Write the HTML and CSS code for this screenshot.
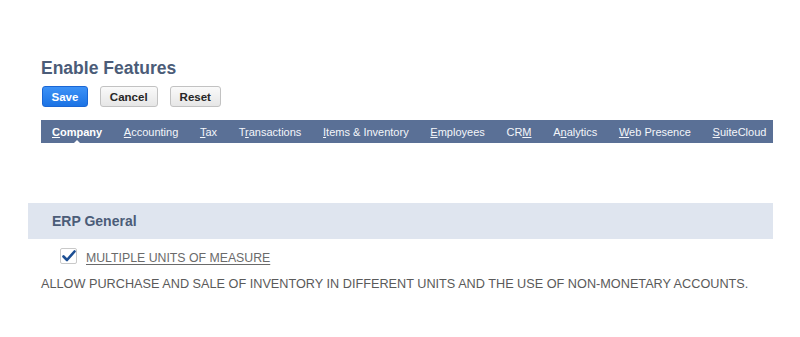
FILE: index.html
```html
<!DOCTYPE html>
<html>
<head>
<meta charset="utf-8">
<link rel="stylesheet" href="styles.css">
</head>
<body>
<div class="page">
  <div class="top">
    <h1 class="title">Enable Features</h1>
    <div class="buttons">
      <button class="btn btn-primary">Save</button>
      <button class="btn">Cancel</button>
      <button class="btn">Reset</button>
    </div>
    <nav class="tabs">
      <span class="tab active"><u>C</u>ompany</span>
      <span class="tab"><u>A</u>ccounting</span>
      <span class="tab"><u>T</u>ax</span>
      <span class="tab">T<u>r</u>ansactions</span>
      <span class="tab"><u>I</u>tems &amp; Inventory</span>
      <span class="tab"><u>E</u>mployees</span>
      <span class="tab">CR<u>M</u></span>
      <span class="tab">A<u>n</u>alytics</span>
      <span class="tab"><u>W</u>eb Presence</span>
      <span class="tab"><u>S</u>uiteCloud</span>
    </nav>
  </div>
  <div class="section">
    <div class="section-head">ERP General</div>
    <div class="field">
      <span class="checkbox">
        <svg width="14" height="12" viewBox="0 0 14 12"><path d="M1.5 6.5 L5 10 L12.5 1.5" fill="none" stroke="#1d4f94" stroke-width="2.6" stroke-linecap="round" stroke-linejoin="round"/></svg>
      </span>
      <span class="field-label">MULTIPLE UNITS OF MEASURE</span>
    </div>
    <p class="desc">ALLOW PURCHASE AND SALE OF INVENTORY IN DIFFERENT UNITS AND THE USE OF NON-MONETARY ACCOUNTS.</p>
  </div>
</div>
</body>
</html>
```

FILE: styles.css
```css
html, body {
  margin: 0;
  padding: 0;
  background: #ffffff;
  font-family: "Liberation Sans", Arial, sans-serif;
}

.page {
  width: 745px;
  margin-left: 28px;
  padding-top: 57px;
}

.top {
  padding-left: 13px;
}

.title {
  margin: 0;
  font-size: 17.5px;
  line-height: 22px;
  font-weight: bold;
  color: #4b5c78;
}

.buttons {
  display: flex;
  gap: 12px;
  margin-top: 7px;
  padding-left: 1px;
}

.btn {
  height: 21px;
  padding: 0 9px;
  font-family: "Liberation Sans", Arial, sans-serif;
  font-size: 11.5px;
  font-weight: bold;
  color: #262626;
  background: linear-gradient(#fafafa, #e6e6e6);
  border: 1px solid #c2c2c2;
  border-radius: 3px;
}

.btn-primary {
  color: #ffffff;
  background: linear-gradient(#3d92f7, #1c73e4);
  border-color: #1a66d4;
  padding: 0 8.5px;
}

.tabs {
  position: relative;
  display: flex;
  gap: 21.7px;
  height: 23px;
  align-items: center;
  margin-top: 13px;
  padding-left: 11px;
  background: #5a7096;
}

.tab {
  position: relative;
  font-size: 11px;
  color: #f4f6fa;
  white-space: nowrap;
}

.tab u {
  text-decoration-thickness: 1px;
  text-underline-offset: 1px;
}

.tab.active {
  font-weight: bold;
  color: #ffffff;
}

.tab.active::after {
  content: "";
  position: absolute;
  left: 50%;
  bottom: -6px;
  margin-left: -4px;
  border-left: 4px solid transparent;
  border-right: 4px solid transparent;
  border-bottom: 4px solid #ffffff;
}

.section {
  margin-top: 60px;
}

.section-head {
  height: 36px;
  line-height: 36px;
  padding-left: 24px;
  background: #dfe5ef;
  font-size: 14px;
  font-weight: bold;
  color: #4b5c78;
}

.field {
  display: flex;
  align-items: center;
  gap: 9px;
  margin-top: 7px;
  padding-left: 32px;
}

.checkbox {
  display: flex;
  align-items: center;
  justify-content: center;
  width: 15px;
  height: 14px;
  border: 1px solid #c9c9c9;
  border-radius: 2px;
  background: #ffffff;
}

.field-label {
  font-size: 12.3px;
  color: #6a6a6a;
  text-decoration: underline;
  text-underline-offset: 2px;
  margin-top: 5px;
}

.desc {
  margin: 12px 0 0 13px;
  font-size: 12.7px;
  color: #5a5a5a;
  white-space: nowrap;
}
```
